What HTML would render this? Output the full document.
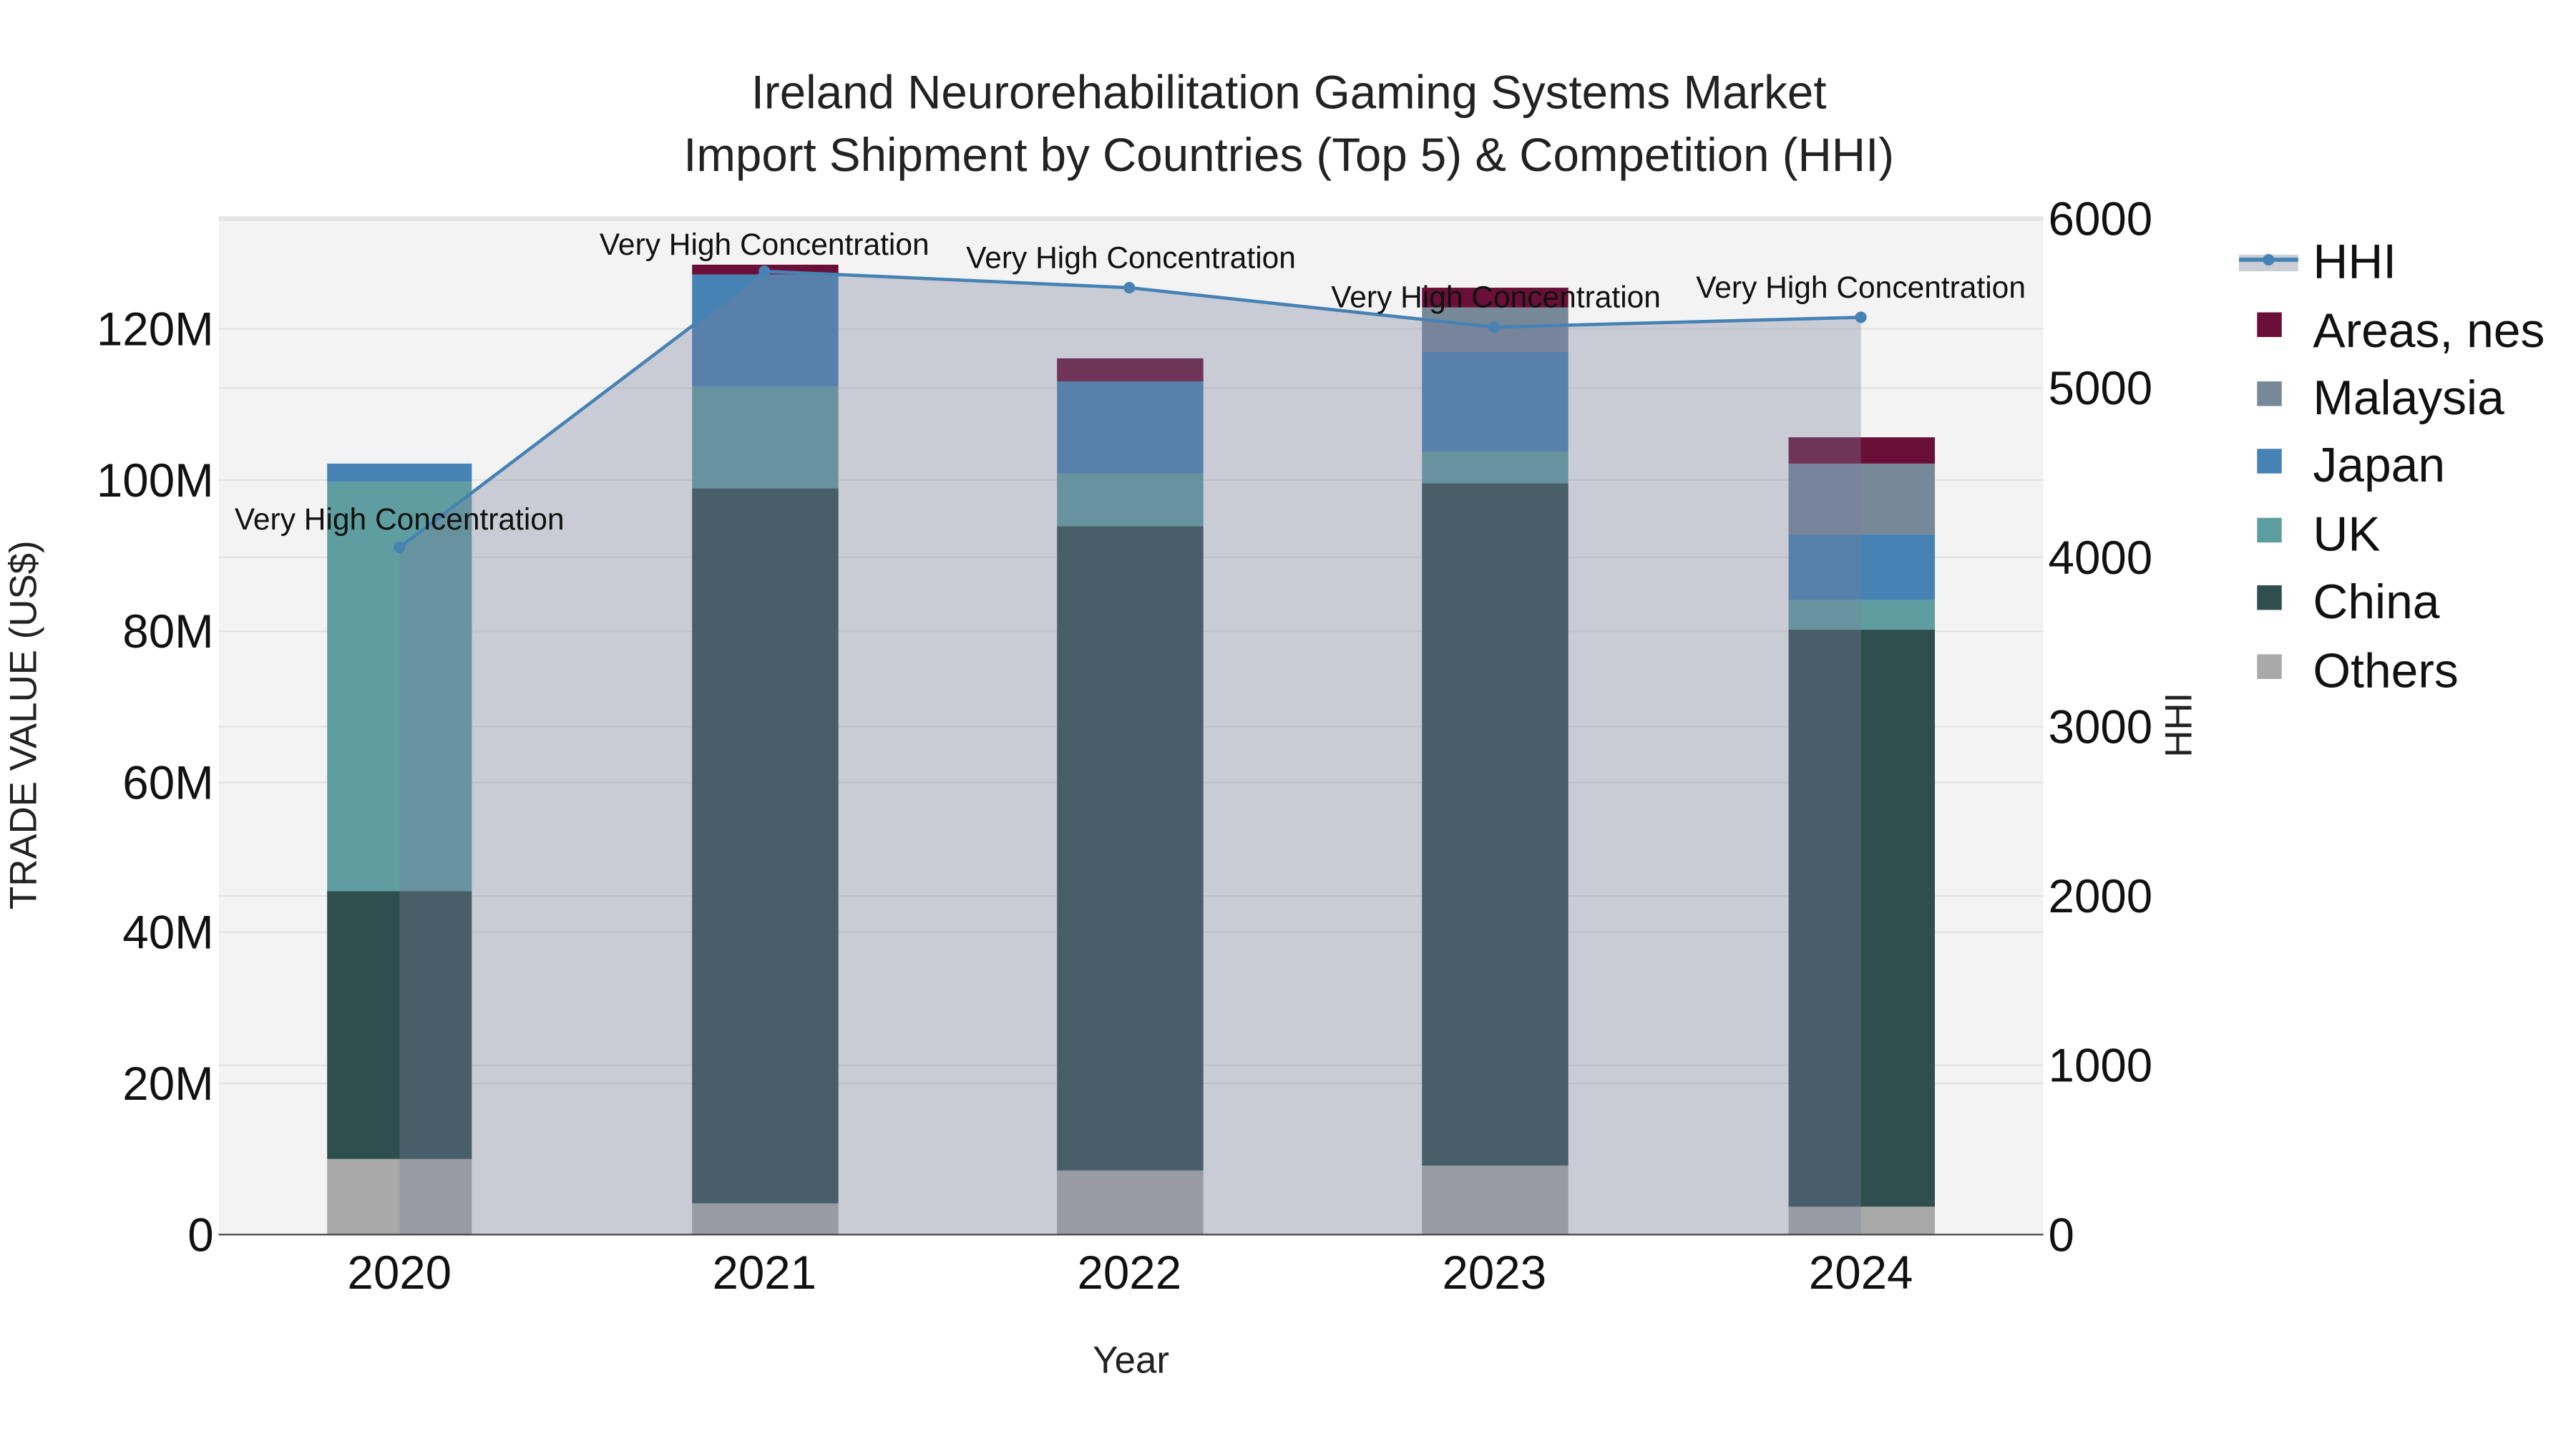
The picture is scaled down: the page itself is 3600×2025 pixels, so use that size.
<!DOCTYPE html>
<html><head><meta charset="utf-8"><style>
html,body{margin:0;padding:0;background:#fff;}
svg{display:block;}
text{font-family:"Liberation Sans",sans-serif;}
</style></head><body>
<svg width="3600" height="2025" viewBox="0 0 1567 881.4" preserveAspectRatio="none" xmlns="http://www.w3.org/2000/svg">
<rect width="1600" height="900" fill="#fff"/>
<rect x="133" y="133" width="1110" height="618" fill="#f3f3f3"/>
<g stroke="#e2e2e2" stroke-width="1">
<line x1="133" x2="1243" y1="659" y2="659"/><line x1="133" x2="1243" y1="567" y2="567"/>
<line x1="133" x2="1243" y1="476" y2="476"/><line x1="133" x2="1243" y1="384" y2="384"/>
<line x1="133" x2="1243" y1="292" y2="292"/><line x1="133" x2="1243" y1="200" y2="200"/>
<line x1="133" x2="1243" y1="648" y2="648"/><line x1="133" x2="1243" y1="545" y2="545"/>
<line x1="133" x2="1243" y1="442" y2="442"/><line x1="133" x2="1243" y1="339" y2="339"/>
<line x1="133" x2="1243" y1="236" y2="236"/>
</g>
<line x1="133" x2="1243" y1="133" y2="133" stroke="#e6e6e6" stroke-width="3"/>
<g>
<rect x="199" y="705" width="88" height="46" fill="#a9a9a9"/>
<rect x="199" y="542" width="88" height="163" fill="#2f4f4f"/>
<rect x="199" y="293" width="88" height="249" fill="#5f9ea0"/>
<rect x="199" y="282" width="88" height="11" fill="#4682b4"/>

<rect x="421" y="732" width="89" height="19" fill="#a9a9a9"/>
<rect x="421" y="297" width="89" height="435" fill="#2f4f4f"/>
<rect x="421" y="235" width="89" height="62" fill="#5f9ea0"/>
<rect x="421" y="167" width="89" height="68" fill="#4682b4"/>
<rect x="421" y="161" width="89" height="6" fill="#6a1038"/>

<rect x="643" y="712" width="89" height="39" fill="#a9a9a9"/>
<rect x="643" y="320" width="89" height="392" fill="#2f4f4f"/>
<rect x="643" y="288" width="89" height="32" fill="#5f9ea0"/>
<rect x="643" y="232" width="89" height="56" fill="#4682b4"/>
<rect x="643" y="218" width="89" height="14" fill="#6a1038"/>

<rect x="865" y="709" width="89" height="42" fill="#a9a9a9"/>
<rect x="865" y="294" width="89" height="415" fill="#2f4f4f"/>
<rect x="865" y="275" width="89" height="19" fill="#5f9ea0"/>
<rect x="865" y="214" width="89" height="61" fill="#4682b4"/>
<rect x="865" y="187" width="89" height="27" fill="#778899"/>
<rect x="865" y="175" width="89" height="12" fill="#6a1038"/>

<rect x="1088" y="734" width="89" height="17" fill="#a9a9a9"/>
<rect x="1088" y="383" width="89" height="351" fill="#2f4f4f"/>
<rect x="1088" y="365" width="89" height="18" fill="#5f9ea0"/>
<rect x="1088" y="325" width="89" height="40" fill="#4682b4"/>
<rect x="1088" y="282" width="89" height="43" fill="#778899"/>
<rect x="1088" y="266" width="89" height="16" fill="#6a1038"/>
</g>
<polygon points="243,751 243,333 465,165 687,175 909,199 1132,193 1132,751" fill="rgba(120,126,155,0.34)"/>
<polyline points="243,333 465,165 687,175 909,199 1132,193" fill="none" stroke="#4682b4" stroke-width="2"/>
<g fill="#4682b4"><circle cx="243" cy="333" r="3.5"/><circle cx="465" cy="165" r="3.5"/><circle cx="687" cy="175" r="3.5"/><circle cx="909" cy="199" r="3.5"/><circle cx="1132" cy="193" r="3.5"/></g>
<line x1="133" x2="1243" y1="751" y2="751" stroke="#444" stroke-width="1"/>
<g font-size="18.5" text-anchor="middle" fill="#111">
<text x="243" y="322">Very High Concentration</text>
<text x="465" y="155">Very High Concentration</text>
<text x="688" y="163">Very High Concentration</text>
<text x="910" y="187">Very High Concentration</text>
<text x="1132" y="181">Very High Concentration</text>
</g>
<g font-size="28.5" text-anchor="middle" fill="#222">
<text x="784" y="66">Ireland Neurorehabilitation Gaming Systems Market</text>
<text x="784" y="104">Import Shipment by Countries (Top 5) &amp; Competition (HHI)</text>
</g>
<g font-size="28.5" text-anchor="end" fill="#111">
<text x="130" y="761">0</text><text x="130" y="669">20M</text><text x="130" y="577">40M</text>
<text x="130" y="486">60M</text><text x="130" y="394">80M</text><text x="130" y="302">100M</text><text x="130" y="210">120M</text>
</g>
<g font-size="28.5" fill="#111">
<text x="1246" y="761">0</text><text x="1246" y="658">1000</text><text x="1246" y="555">2000</text>
<text x="1246" y="452">3000</text><text x="1246" y="349">4000</text><text x="1246" y="246">5000</text><text x="1246" y="143">6000</text>
</g>
<g font-size="28.5" text-anchor="middle" fill="#111">
<text x="243" y="784">2020</text><text x="465" y="784">2021</text><text x="687" y="784">2022</text><text x="909" y="784">2023</text><text x="1132" y="784">2024</text>
</g>
<text x="688" y="835" font-size="23" text-anchor="middle" fill="#222">Year</text>
<text transform="translate(22,441) rotate(-90)" font-size="23" text-anchor="middle" fill="#222">TRADE VALUE (US$)</text>
<text transform="translate(1333,441) rotate(-90)" font-size="23" text-anchor="middle" fill="#222">HHI</text>
<rect x="1362" y="155" width="36" height="10" fill="#c9cdd5"/>
<line x1="1362" x2="1398" y1="158" y2="158" stroke="#4682b4" stroke-width="2.5"/>
<circle cx="1380" cy="158" r="3.5" fill="#4682b4"/>
<rect x="1373" y="190" width="15" height="15" fill="#6a1038"/>
<rect x="1373" y="232" width="15" height="15" fill="#778899"/>
<rect x="1373" y="273" width="15" height="15" fill="#4682b4"/>
<rect x="1373" y="315" width="15" height="15" fill="#5f9ea0"/>
<rect x="1373" y="356" width="15" height="15" fill="#2f4f4f"/>
<rect x="1373" y="398" width="15" height="15" fill="#a9a9a9"/>
<g font-size="29.5" fill="#111">
<text x="1407" y="169">HHI</text>
<text x="1407" y="211">Areas, nes</text>
<text x="1407" y="252">Malaysia</text>
<text x="1407" y="293">Japan</text>
<text x="1407" y="335">UK</text>
<text x="1407" y="376">China</text>
<text x="1407" y="418">Others</text>
</g>
</svg>
</body></html>
